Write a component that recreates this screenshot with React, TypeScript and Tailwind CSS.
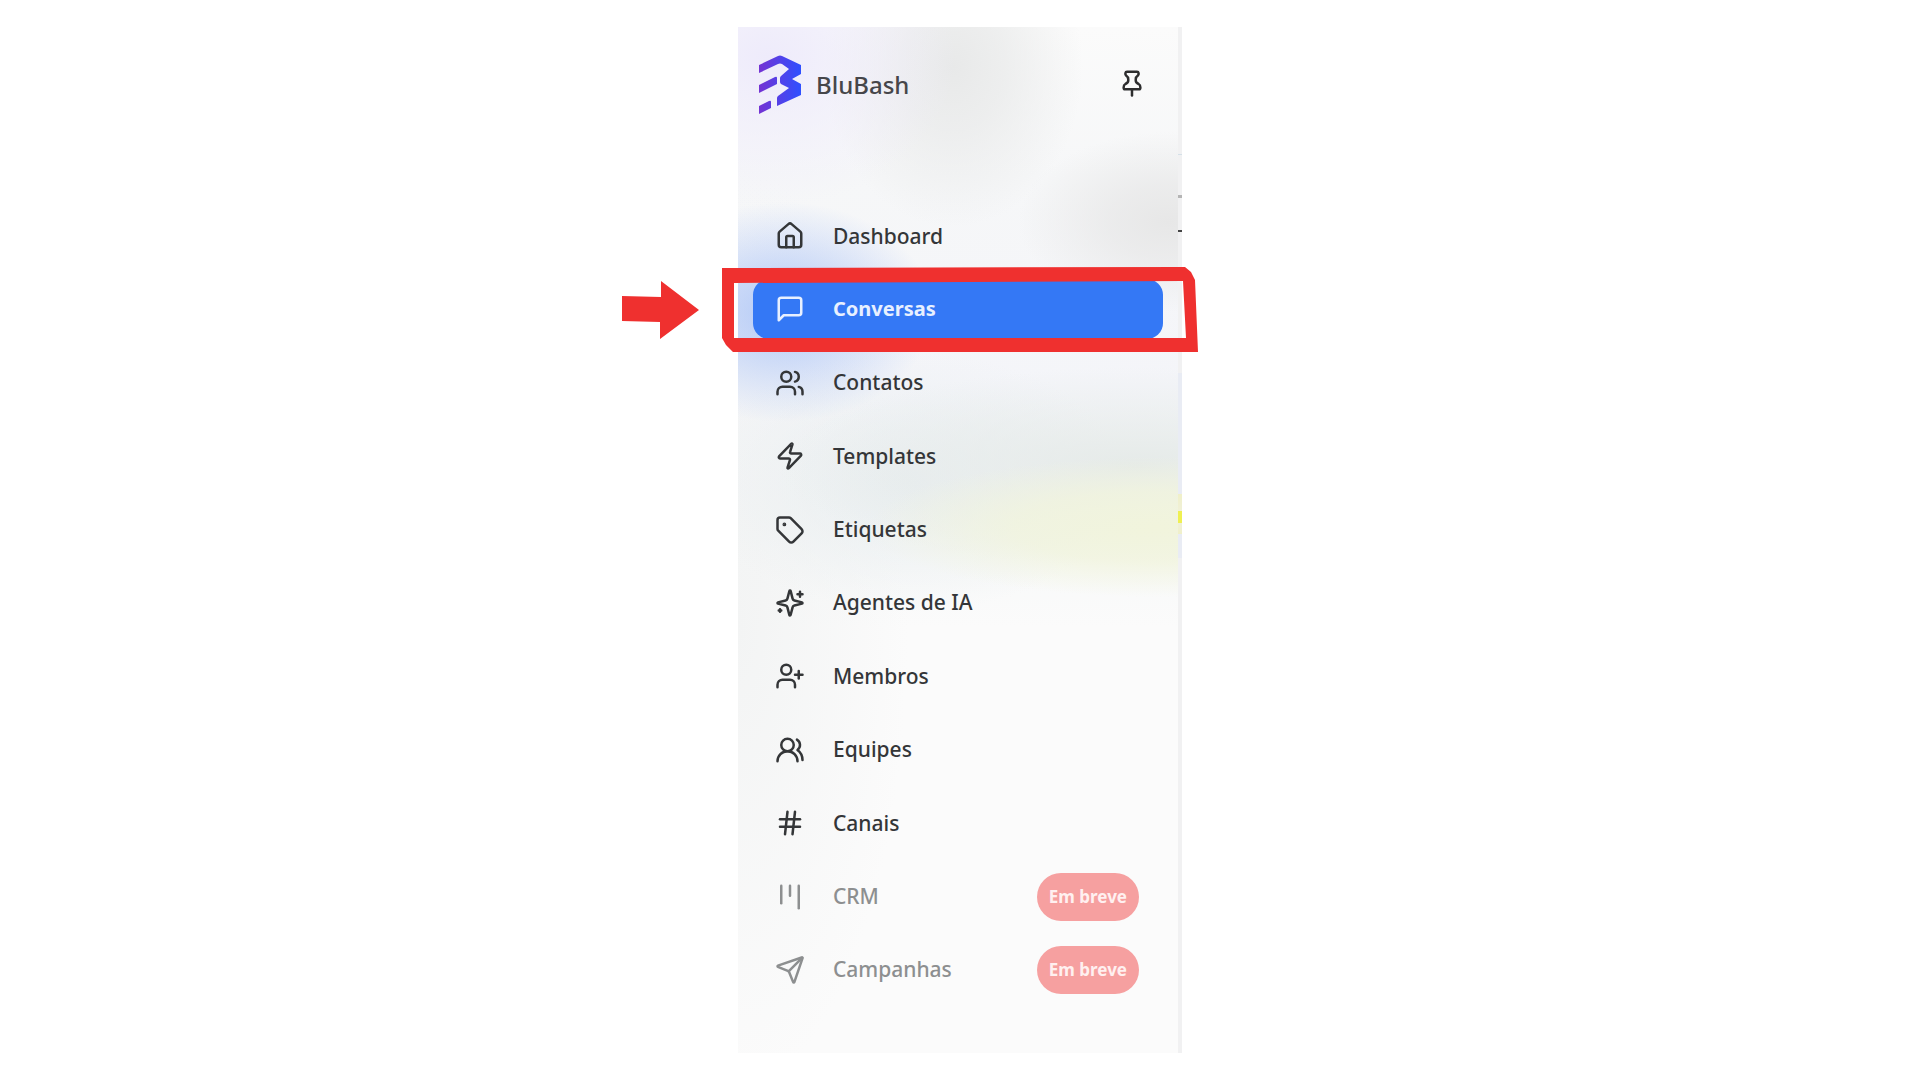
import { Hash, House, Kanban, Send, Tag, UserPlus, Users, UsersRound, Zap } from "lucide-react";
import type { ReactNode } from "react";

function Glyph({ children }: { children: ReactNode }) {
  return (
    <svg viewBox="0 0 24 24" fill="none" stroke="currentColor" strokeWidth="2" strokeLinecap="round" strokeLinejoin="round" className="size-[30px]" aria-hidden="true">
      {children}
    </svg>
  );
}

type Item = { label: string; icon: ReactNode; active?: boolean; soon?: boolean };

const items: Item[] = [
  { label: "Dashboard", icon: <House className="size-[30px]" /> },
  {
    label: "Conversas",
    active: true,
    icon: (
      <Glyph>
        <path d="M21 15a2 2 0 0 1-2 2H7l-4 4V5a2 2 0 0 1 2-2h14a2 2 0 0 1 2 2z" />
      </Glyph>
    ),
  },
  { label: "Contatos", icon: <Users className="size-[30px]" /> },
  { label: "Templates", icon: <Zap className="size-[30px]" /> },
  { label: "Etiquetas", icon: <Tag className="size-[30px]" /> },
  {
    label: "Agentes de IA",
    icon: (
      <Glyph>
        <path d="M9.937 15.5A2 2 0 0 0 8.5 14.063l-6.135-1.582a.5.5 0 0 1 0-.962L8.5 9.936A2 2 0 0 0 9.937 8.5l1.582-6.135a.5.5 0 0 1 .963 0L14.063 8.5A2 2 0 0 0 15.5 9.937l6.135 1.581a.5.5 0 0 1 0 .964L15.5 14.063a2 2 0 0 0-1.437 1.437l-1.582 6.135a.5.5 0 0 1-.963 0z" />
        <path d="M20 3v4M22 5h-4M4 17v2M5 18H3" />
      </Glyph>
    ),
  },
  { label: "Membros", icon: <UserPlus className="size-[30px]" /> },
  { label: "Equipes", icon: <UsersRound className="size-[30px]" /> },
  { label: "Canais", icon: <Hash className="size-[30px]" /> },
  { label: "CRM", soon: true, icon: <Kanban className="size-[30px]" /> },
  { label: "Campanhas", soon: true, icon: <Send className="size-[30px]" /> },
];

function Logo() {
  return (
    <svg viewBox="0 0 42 60" className="h-[60px] w-[42px]" aria-hidden="true">
      <defs>
        <linearGradient id="brand" x1="0" y1="0" x2="42" y2="0" gradientUnits="userSpaceOnUse">
          <stop offset="0" stopColor="#7433d3" />
          <stop offset="1" stopColor="#2f50ff" />
        </linearGradient>
      </defs>
      <g fill="url(#brand)">
        <path d="M0 10 19 1q2-1 4 0l19 9v9l-9 5 9 5v11L18 51V43q0-1 1-2l11-8-8-4q-1-1-1-2v-4q0-1 1-2l8-7-7-5q-2-1-4 0L0 18z" />
        <path d="M0 30 16 22q2-1 2 1v6L0 38z" />
        <path d="M0 51l10-5q2-1 2 1v6L0 59z" />
      </g>
    </svg>
  );
}

function NavItem({ label, icon, active, soon }: Item) {
  const tone = active
    ? "bg-[#3478f5] text-[#e8f0ff] text-[20px] font-bold"
    : soon
      ? "text-[#8d8f90] text-[21px] font-medium"
      : "text-[#343638] text-[21px] font-medium";
  return (
    <li>
      <a
        href="#"
        aria-current={active ? "page" : undefined}
        aria-disabled={soon}
        className={`flex h-[60px] items-center gap-7 rounded-2xl pr-6 pl-[22px] leading-none ${tone}`}
      >
        {icon}
        <span>{label}</span>
        {soon && (
          <span className="ml-auto flex h-12 items-center rounded-full bg-[#f6a0a0] px-3 text-[17px] font-bold text-[#fff0f0]">
            Em breve
          </span>
        )}
      </a>
    </li>
  );
}

const glow =
  "bg-[radial-gradient(190px_150px_at_30px_30px,#eeebfb_0%,#eeebfb00_100%),radial-gradient(130px_160px_at_215px_40px,#e8e9e9_0%,#e8e9e9b0_40%,#e8e9e900_100%),radial-gradient(150px_90px_at_430px_195px,#e7e7e7_0%,#e7e7e7b0_40%,#e7e7e700_100%),radial-gradient(150px_110px_at_45px_285px,#b4caf7_0%,#b4caf7b0_35%,#b4caf700_100%),radial-gradient(290px_70px_at_420px_500px,#f1f4dc_0%,#f1f4dcc0_50%,#f1f4dc00_100%),radial-gradient(360px_100px_at_400px_440px,#e5eae8_0%,#e5eae800_100%),radial-gradient(220px_130px_at_170px_455px,#e9eef0_0%,#e9eef000_100%),radial-gradient(170px_460px_at_0px_600px,#f3f4f4_0%,#f3f4f400_100%),linear-gradient(#fbfbfb_0px,#f6f7f8_150px,#f4f5f9_360px,#f5f7f7_480px,#fbfbfb_600px)]";

const edge =
  "bg-[linear-gradient(#f1f1f2_127px,#d5e0e8_127px,#d5e0e8_128px,#f1f1f2_128px,#f1f1f2_168px,#b5b5b5_168px,#b5b5b5_171px,#f1f1f2_171px,#f1f1f2_203px,#454545_203px,#454545_205px,#f1f1f2_205px,#f1f1f2_346px,#e9ecf4_346px,#e9ecf4_467px,#f0f0c8_467px,#f0f0d8_484px,#eff052_484px,#eff052_496px,#f0f0d8_496px,#f0f0c8_507px,#e9ecf4_507px,#e9ecf4_531px,#f1f1f2_531px)]";

export default function App() {
  return (
    <main className="flex h-screen min-h-[900px] justify-center bg-white py-[27px] font-['Noto_Sans',sans-serif]">
      <aside className={`relative flex w-[444px] ${glow}`}>
        <div className="flex flex-1 flex-col px-[15px] pt-7 pb-[53px]">
          <header className="flex h-[60px] items-center gap-[15px] pr-4 pl-[6px]">
            <Logo />
            <span className="text-[24px] leading-none font-medium text-[#46464a]">BluBash</span>
            <button type="button" aria-label="Fixar menu" className="ml-auto self-start pt-[13px] text-[#2d2d2e]">
              <Glyph>
                <path d="M12 17v5" />
                <path d="M8 3h8c1.5 0 1.700 2 .7 3C15.500 6.800 15 7.500 15 9v1c0 1.500 1 2.200 2.300 2.800 1.200.6 1.400 1.500 1.400 2.700q0 1.500-1 1.500H6.300q-1 0-1-1.500c0-1.200.2-2.100 1.400-2.700C8 12.200 9 11.500 9 10V9c0-1.500-.5-2.200-1.700-3C6.300 5 6.500 3 8 3z" />
              </Glyph>
            </button>
          </header>
          <nav className="flex flex-1 flex-col pt-[91px]">
            <ul className="flex flex-1 flex-col justify-between">
              {items.map((item) => (
                <NavItem key={item.label} {...item} />
              ))}
            </ul>
          </nav>
        </div>
        <div className={`w-1 ${edge}`} aria-hidden="true" />
        <svg viewBox="0 0 580 90" fill="#ef302f" className="pointer-events-none absolute top-[238px] -left-[118px] h-[90px] w-[580px]" aria-hidden="true">
          <path d="M2 31 41 32V16l38 29-39 29V57L2 56z" />
          <path fillRule="evenodd" d="M102 3 565 2l6 5 4 8 3 72H113l-7-7-4-7zM114 18v55h452l-3-57z" />
        </svg>
      </aside>
    </main>
  );
}
